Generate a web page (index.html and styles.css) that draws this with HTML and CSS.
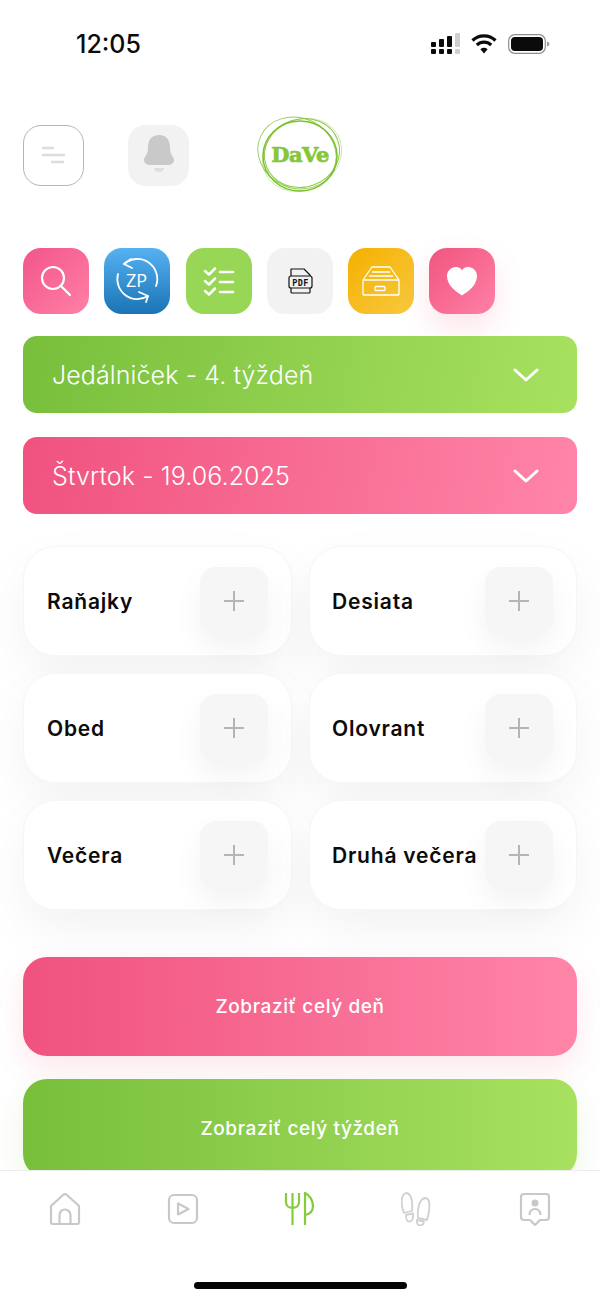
FILE: index.html
```html
<!DOCTYPE html>
<html lang="sk">
<head>
  <meta charset="UTF-8">
  <title>Jedálniček</title>
  <link rel="stylesheet" href="styles.css">
</head>
<body>
  <div class="app">
    <main class="content">
      <div class="status-bar">
        <span class="time">12:05</span>
        <div class="status-icons">
          <svg width="31" height="22" viewBox="0 0 31 22" fill="#0b0b0b">
            <rect x="1" y="9" width="5" height="5" rx="1"/><rect x="1" y="16" width="5" height="5" rx="1"/>
            <rect x="9" y="6" width="5" height="8" rx="1"/><rect x="9" y="16" width="5" height="5" rx="1"/>
            <rect x="17" y="3" width="5" height="11" rx="1"/><rect x="17" y="16" width="5" height="5" rx="1"/>
            <rect x="25" y="0" width="5" height="14" rx="1" fill="#cfcfcf"/><rect x="25" y="16" width="5" height="5" rx="1" fill="#cfcfcf"/>
          </svg>
          <svg class="wifi" width="26" height="22" viewBox="0 0 26 22" fill="none" stroke="#0b0b0b" stroke-width="3.2">
            <path d="M1.500 7.500a16.500 16.500 0 0 1 23 0"/>
            <path d="M5.800 12a10.300 10.300 0 0 1 14.400 0"/>
            <path d="M13 20.500l-3.600-4.200a5.200 5.200 0 0 1 7.200 0z" fill="#0b0b0b" stroke="none"/>
          </svg>
          <svg width="42" height="22" viewBox="0 0 42 22">
            <rect x="0.700" y="1.700" width="36.600" height="18.600" rx="6" fill="none" stroke="#8e8e8e" stroke-width="1.200"/>
            <rect x="3" y="4" width="32" height="14" rx="4" fill="#0b0b0b"/>
            <path d="M39 8.500c1.600.5 2.400 1.400 2.400 2.500s-.8 2-2.400 2.500z" fill="#9a9a9a"/>
          </svg>
        </div>
      </div>

      <header class="top-row">
        <button class="square-btn menu-btn">
          <svg width="26" height="18" viewBox="0 0 26 18" stroke="#dcdcdc" stroke-width="2.400">
            <path d="M1 2h12M1 9h23M10 16h13"/>
          </svg>
        </button>
        <button class="square-btn bell-btn">
          <svg width="36" height="46" viewBox="0 0 36 46" fill="#c9c9c9">
            <path d="M18 3c7.500 0 11 5.500 11 12 0 5 1 7 3 10 2.500 4 0 8-5 8H9c-5 0-7.500-4-5-8 2-3 3-5 3-10C7 8.500 10.500 3 18 3z"/>
            <path d="M13 36h10c0 2.500-2.500 4-5 4s-5-1.500-5-4z" fill="#dedede"/>
          </svg>
        </button>
        <div class="logo">
          <svg width="88" height="82" viewBox="0 0 88 82" fill="none" stroke="#7cc12e">
            <ellipse cx="44" cy="42" rx="37" ry="35" stroke-width="1.500"/>
            <ellipse cx="41" cy="39" rx="40" ry="35" stroke-width="0.900" stroke-opacity=".8" transform="rotate(25 41 39)"/>
            <ellipse cx="46" cy="41" rx="41" ry="35" stroke-width="0.700" stroke-opacity=".5" transform="rotate(-30 46 41)"/>
            <ellipse cx="46" cy="39" rx="34" ry="38" stroke-width="1" stroke-opacity=".85" transform="rotate(70 46 39)"/>
          </svg>
          <span class="logo-text">DaVe</span>
        </div>
      </header>

      <nav class="tools">
        <div class="tile tile-search">
          <svg width="66" height="66" viewBox="0 0 66 66" fill="none" stroke="#fff" stroke-width="2.200" stroke-linecap="round">
            <circle cx="30" cy="30" r="11"/><path d="M38 38l9 9"/>
          </svg>
        </div>
        <div class="tile tile-zp">
          <svg width="66" height="66" viewBox="0 0 66 66" fill="none" stroke="#fff" stroke-width="1.800" stroke-linecap="round" stroke-linejoin="round">
            <path d="M20 16A20 20 0 0 1 52 38"/><path d="M27 11l-7 5 8 4"/>
            <path d="M14 26A20 20 0 0 0 44 48"/><path d="M35 44l9 4-2 6"/>
            <text x="32.500" y="38.500" class="zp-text" text-anchor="middle">ZP</text>
          </svg>
        </div>
        <div class="tile tile-list">
          <svg width="66" height="66" viewBox="0 0 66 66" fill="none" stroke="#fff" stroke-width="2.500" stroke-linecap="round" stroke-linejoin="round">
            <path d="M19 23l4 3.500 6-6M19 33l4 3.500 6-6M19 43l4 3.500 6-6"/>
            <path d="M34 24h13M34 34h13M34 44h13"/>
          </svg>
        </div>
        <div class="tile tile-pdf">
          <svg width="66" height="66" viewBox="0 0 66 66" fill="none" stroke="#111" stroke-width="1.200" stroke-linejoin="round">
            <path d="M24 28v-7h13l6 6v1M24 40v4a1 1 0 0 0 1 1h17a1 1 0 0 0 1-1v-4"/>
            <rect x="22" y="28" width="23" height="12" rx="2"/>
            <text x="33.500" y="37.500" class="pdf-text" text-anchor="middle">PDF</text>
          </svg>
        </div>
        <div class="tile tile-box">
          <svg width="66" height="66" viewBox="0 0 66 66" fill="none" stroke="#fff" stroke-width="1.300" stroke-linejoin="round">
            <path d="M15 32l9-13h18l9 13"/>
            <path d="M24 24h18M21 28h24"/>
            <rect x="15" y="32" width="36" height="15" rx="1"/>
            <rect x="27" y="38.500" width="10" height="4" rx="1"/>
          </svg>
        </div>
        <div class="tile tile-heart">
          <svg width="66" height="66" viewBox="0 0 66 66" fill="#fff">
            <path d="M33 47.500C28 44 18 38 18 28c0-5 4-9 9-9 3 0 5 1.500 6 3.500 1-2 3-3.500 6-3.500 5 0 9 4 9 9 0 10-10 16-15 19.500z"/>
          </svg>
        </div>
      </nav>

      <section class="selects">
        <div class="select select-green">
          <span>Jedálniček - 4. týždeň</span>
          <svg width="26" height="16" viewBox="0 0 26 16" fill="none" stroke="#fff" stroke-width="3" stroke-linecap="round" stroke-linejoin="round"><path d="M2 3l11 10L24 3"/></svg>
        </div>
        <div class="select select-pink">
          <span>Štvrtok - 19.06.2025</span>
          <svg width="26" height="16" viewBox="0 0 26 16" fill="none" stroke="#fff" stroke-width="3" stroke-linecap="round" stroke-linejoin="round"><path d="M2 3l11 10L24 3"/></svg>
        </div>
      </section>

      <section class="meals">
        <div class="meal"><span class="meal-name">Raňajky</span><div class="plus"></div></div>
        <div class="meal"><span class="meal-name">Desiata</span><div class="plus"></div></div>
        <div class="meal"><span class="meal-name">Obed</span><div class="plus"></div></div>
        <div class="meal"><span class="meal-name">Olovrant</span><div class="plus"></div></div>
        <div class="meal"><span class="meal-name">Večera</span><div class="plus"></div></div>
        <div class="meal"><span class="meal-name">Druhá večera</span><div class="plus"></div></div>
      </section>

      <section class="actions">
        <button class="action action-pink">Zobraziť celý deň</button>
        <button class="action action-green">Zobraziť celý týždeň</button>
      </section>
    </main>

    <footer class="tabbar">
      <div class="tabs">
        <svg class="tab" width="34" height="34" viewBox="0 0 34 34" fill="none" stroke="#c8c8c8" stroke-width="2.200" stroke-linejoin="round">
          <path d="M3 14L15 3a3 3 0 0 1 4 0l12 11v16a2 2 0 0 1-2 2H5a2 2 0 0 1-2-2z"/>
          <path d="M11.500 32V23a5.500 5.500 0 0 1 11 0v9"/>
        </svg>
        <svg class="tab" width="34" height="34" viewBox="0 0 34 34" fill="none" stroke="#c8c8c8" stroke-width="2.200" stroke-linejoin="round">
          <rect x="3" y="3" width="28" height="28" rx="5"/>
          <path d="M12 11.500v11L22.500 17z"/>
        </svg>
        <svg class="tab" width="34" height="34" viewBox="-2 0 34 34" fill="none" stroke="#84cc3c" stroke-width="2.200" stroke-linejoin="round">
          <path d="M1 1v9c0 4 3 6 6.500 6s6.500-2 6.500-6V1M7.500 1v32"/>
          <path d="M20 33V1c5 2 8 8 8 13 0 5-3 8-8 9"/>
        </svg>
        <svg class="tab" width="34" height="34" viewBox="2 0 34 34" fill="none" stroke="#d0d0d0" stroke-width="1.800" stroke-linejoin="round">
          <path d="M5 21C2 14 1 3 7 1c5 0 7 8 6 18z"/>
          <path d="M7 23l7-1.500c.5 4-.5 8-3.500 8S7 27 7 23z"/>
          <path d="M19 26c-1-8 1-19 7-20 5 0 6 8 2 22z"/>
          <path d="M18 28l7 1.500c-.5 2.500-2 4-4 4s-3.500-2-3-5.500z"/>
        </svg>
        <svg class="tab" width="34" height="34" viewBox="0 0 34 34" fill="none" stroke="#c8c8c8" stroke-width="2.200" stroke-linejoin="round">
          <path d="M6 2h22a3 3 0 0 1 3 3v20a3 3 0 0 1-3 3h-6l-5 5-5-5H6a3 3 0 0 1-3-3V5a3 3 0 0 1 3-3z"/>
          <circle cx="17" cy="11" r="3.500" fill="#c8c8c8" stroke="none"/>
          <path d="M11.500 23c0-4 2.500-6 5.500-6s5.500 2 5.500 6"/>
        </svg>
      </div>
      <div class="home-indicator"></div>
    </footer>
  </div>
</body>
</html>
```

FILE: styles.css
```css
* {
  box-sizing: border-box;
}

body {
  margin: 0;
  background: #fff;
  font-family: Inter, "Liberation Sans", sans-serif;
  overflow: hidden;
}

button {
  font-family: inherit;
  border: none;
  padding: 0;
}

.app {
  width: 600px;
  height: 1301px;
  display: flex;
  flex-direction: column;
}

.content {
  height: 1170px;
  overflow: hidden;
  padding: 0 23px;
}

/* status bar */
.status-bar {
  height: 88px;
  padding: 0 27px 0 53px;
  display: flex;
  align-items: center;
  justify-content: space-between;
}

.time {
  font-size: 25px;
  font-weight: 500;
  color: #0b0b0b;
}

.status-icons {
  display: flex;
  align-items: center;
  gap: 10px;
}

.wifi {
  margin-right: 1px;
}

/* logo row */
.top-row {
  margin-top: 27px;
  height: 80px;
  display: flex;
  align-items: center;
}

.square-btn {
  width: 61px;
  height: 61px;
  border-radius: 18px;
  display: flex;
  align-items: center;
  justify-content: center;
}

.menu-btn {
  background: #fff;
  border: 1.5px solid #b5b5b5;
}

.bell-btn {
  margin-left: 44px;
  background: #f2f2f2;
}

.logo {
  margin-left: 67px;
  width: 88px;
  height: 82px;
  position: relative;
}

.logo-text {
  position: absolute;
  left: 0;
  right: 0;
  top: 28px;
  text-align: center;
  font-family: "DejaVu Serif", serif;
  font-size: 21px;
  font-weight: 700;
  letter-spacing: -0.5px;
  color: #86c63a;
  -webkit-text-stroke: 0.7px #86c63a;
}

/* tool tiles */
.tools {
  margin-top: 53px;
  display: flex;
  gap: 15.25px;
}

.tile {
  width: 66px;
  height: 66px;
  border-radius: 18px;
}

.tile svg {
  display: block;
}

.tile-search {
  background: linear-gradient(135deg, #f2558a, #ff80a6);
}

.tile-zp {
  background: linear-gradient(180deg, #56b1f2, #1a74b4);
}

.tile-list {
  background: #98d655;
}

.tile-pdf {
  background: #f2f2f2;
}

.tile-box {
  background: linear-gradient(135deg, #f6b000, #f7c93f);
}

.tile-heart {
  background: linear-gradient(135deg, #f0557f, #ff80a6);
  box-shadow: 0 14px 30px rgba(240, 85, 127, 0.16);
}

.zp-text {
  font-family: "Open Sans", sans-serif;
  font-size: 18px;
  font-weight: 400;
  fill: #fff;
  stroke: none;
}

.pdf-text {
  font-family: "DejaVu Sans Mono", monospace;
  font-size: 8.5px;
  font-weight: 700;
  letter-spacing: 0.4px;
  fill: #111;
  stroke: none;
}

/* dropdowns */
.selects {
  margin-top: 22px;
  display: flex;
  flex-direction: column;
  gap: 24px;
}

.select {
  height: 77px;
  border-radius: 14px;
  padding: 0 38px 0 29px;
  display: flex;
  align-items: center;
  justify-content: space-between;
  color: #fff;
  font-size: 25px;
  font-weight: 300;
  letter-spacing: 0.1px;
}

.select-green {
  background: linear-gradient(100deg, #78bf3c, #a8e160);
}

.select-pink {
  background: linear-gradient(100deg, #f0527f, #ff85a8);
}

/* meal cards */
.meals {
  margin-top: 32px;
  display: grid;
  grid-template-columns: 269px 268px;
  grid-auto-rows: 110px;
  column-gap: 17px;
  row-gap: 17px;
}

.meal {
  background: #fff;
  border: 1px solid #f6f6f6;
  border-radius: 32px;
  padding: 0 23px;
  display: flex;
  align-items: center;
  justify-content: space-between;
  box-shadow: 0 20px 50px rgba(0, 0, 0, 0.05);
}

.meal:nth-child(even) {
  padding-left: 22px;
}

.meal-name {
  font-size: 21px;
  font-weight: 600;
  letter-spacing: 0.8px;
  white-space: nowrap;
  color: #0b0b0b;
}

.plus {
  flex: none;
  width: 68px;
  height: 68px;
  margin-left: auto;
  border-radius: 16px;
  background:
    linear-gradient(#b5b5b5, #b5b5b5) center / 20px 2px no-repeat,
    linear-gradient(#b5b5b5, #b5b5b5) center / 2px 20px no-repeat,
    #f6f6f6;
  box-shadow: 0 14px 30px rgba(0, 0, 0, 0.05);
}

/* bottom buttons */
.actions {
  margin-top: 47px;
  display: flex;
  flex-direction: column;
  gap: 23px;
}

.action {
  height: 99px;
  flex: none;
  border-radius: 24px;
  color: #fff;
  font-size: 19px;
  font-weight: 500;
  letter-spacing: 0.6px;
}

.action-pink {
  background: linear-gradient(90deg, #f0527f, #ff85a8);
  box-shadow: 0 12px 30px rgba(240, 82, 127, 0.14);
}

.action-green {
  background: linear-gradient(90deg, #78bf3c, #a8e160);
  box-shadow: 0 12px 30px rgba(120, 191, 60, 0.14);
}

/* tab bar */
.tabbar {
  flex: 1;
  background: #fff;
  border-top: 1px solid #ececec;
  display: flex;
  flex-direction: column;
  align-items: center;
}

.tabs {
  width: 100%;
  margin-top: 21px;
  padding: 0 48px;
  display: flex;
  justify-content: space-between;
}

.home-indicator {
  margin-top: 56px;
  width: 213px;
  height: 7px;
  border-radius: 4px;
  background: #050505;
}
```
